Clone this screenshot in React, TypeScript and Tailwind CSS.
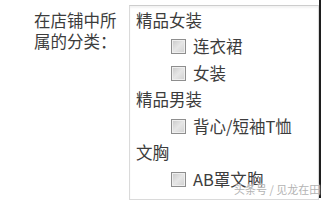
import React from "react";

function Box() {
  return (
    <span className="inline-block w-[15px] h-[15px] border border-[#8e8e8e] bg-gradient-to-br from-[#c8c8c8] via-[#e6e6e6] to-[#d0d0d0] shadow-[inset_0_0_0_1px_#efefef] mr-[7px] shrink-0" />
  );
}

function Item({ label }: { label: string }) {
  return (
    <div className="flex items-center h-[26.5px] pl-[41px]">
      <Box />
      <span>{label}</span>
    </div>
  );
}

function Group({ label }: { label: string }) {
  return <div className="flex items-center h-[26.5px] pl-[6px]">{label}</div>;
}

export default function App() {
  return (
    <div className="relative w-[321px] h-[203px] bg-white flex overflow-hidden text-[#3c3c3c] font-['Noto_Sans_CJK_SC',sans-serif]">
      <div className="w-[129px] pl-[34px] pt-[10px] text-[16.5px] leading-[21px]">
        在店铺中所
        <br />
        属的分类：
      </div>
      <div className="mt-[5px] h-[195px] w-[190px] border border-[#dadada] border-t-[#cdcdcd] shadow-[inset_0_2px_2px_rgba(0,0,0,0.05)] pt-[1px] text-[16.5px]">
        <Group label="精品女装" />
        <Item label="连衣裙" />
        <Item label="女装" />
        <Group label="精品男装" />
        <Item label="背心/短袖T恤" />
        <Group label="文胸" />
        <Item label="AB罩文胸" />
      </div>
      <div className="w-[2px] h-[198px] bg-[#1e1e1e]" />
      <div className="absolute left-[234px] top-[182px] text-[11px] leading-[14px] text-[#b4b4b4] [text-shadow:0_0_2px_#fff,0_0_2px_#fff]">
        头条号 / 见龙在田
      </div>
    </div>
  );
}
